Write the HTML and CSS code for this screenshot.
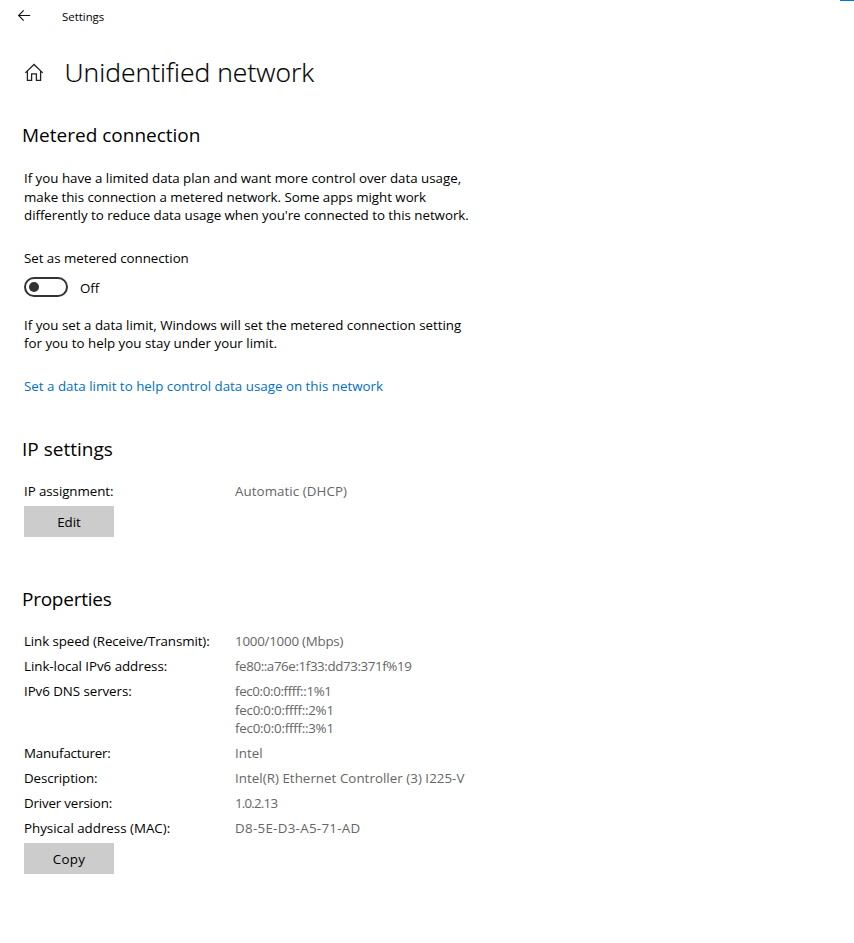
FILE: index.html
```html
<!DOCTYPE html>
<html lang="en">
<head>
<meta charset="utf-8">
<title>Settings</title>
<link rel="stylesheet" href="styles.css">
</head>
<body>
<span class="accent"></span>
<header class="titlebar">
  <svg class="back" viewBox="0 0 14 12" width="14" height="12"><path d="M13.2 5.5H1.8M6.7 .4 1.6 5.5l5.1 5.1"/></svg>
  <span class="app">Settings</span>
</header>
<main>
  <div class="heading">
    <svg class="home" viewBox="0 0 20 20" width="20" height="20"><path d="M1.3 10.9 10 2.5l8.7 8.4M3.4 9.2v9.1h4.2v-6.5h4.8v6.5h4.2V9.2"/></svg>
    <h1>Unidentified network</h1>
  </div>
  <section class="metered">
    <h2>Metered connection</h2>
    <p><span class="t w-a1">If you have a limited data plan and want more control over data usage,</span><br><span class="t w-a2">make this connection a metered network. Some apps might work</span><br><span class="t w-a3">differently to reduce data usage when you're connected to this network.</span></p>
    <div class="label"><span class="t w-set">Set as metered connection</span></div>
    <div class="switch-row"><span class="switch"></span><span class="state">Off</span></div>
    <p class="hint"><span class="t">If you set a data limit, Windows will set the metered connection setting</span><br><span class="t">for you to help you stay under your limit.</span></p>
    <a class="link">Set a data limit to help control data usage on this network</a>
  </section>
  <section class="ip">
    <h2>IP settings</h2>
    <dl><dt class="w-ipa">IP assignment:</dt><dd class="w-auto">Automatic (DHCP)</dd></dl>
    <button>Edit</button>
  </section>
  <section class="properties">
    <h2 class="w-prop">Properties</h2>
    <dl>
      <dt class="w-speed">Link speed (Receive/Transmit):</dt><dd class="w-mbps">1000/1000 (Mbps)</dd>
      <dt class="w-local">Link-local IPv6 address:</dt><dd class="w-fe80">fe80::a76e:1f33:dd73:371f%19</dd>
      <dt class="w-dns">IPv6 DNS servers:</dt><dd><span class="w-d1">fec0:0:0:ffff::1%1</span><br><span class="w-d2">fec0:0:0:ffff::2%1</span><br><span class="w-d2">fec0:0:0:ffff::3%1</span></dd>
      <dt class="w-man">Manufacturer:</dt><dd>Intel</dd>
      <dt class="w-desc">Description:</dt><dd class="w-ctrl">Intel(R) Ethernet Controller (3) I225-V</dd>
      <dt class="w-man">Driver version:</dt><dd class="w-ver">1.0.2.13</dd>
      <dt>Physical address (MAC):</dt><dd class="w-mac">D8-5E-D3-A5-71-AD</dd>
    </dl>
    <button class="w-copy">Copy</button>
  </section>
</main>
</body>
</html>
```

FILE: styles.css
```css
* { box-sizing: border-box; }
body { margin: 0; background: #fff; color: #000; font: 13.33px/18.62px "Open Sans", "Noto Sans", sans-serif; }
.t { white-space: nowrap; }
.accent { position: absolute; top: 0; right: 0; width: 14px; height: 1px; background: #0078d7; }
.titlebar { display: flex; align-items: center; height: 32px; padding-left: 17px; }
.back { fill: none; stroke: #111; stroke-width: 1.1; margin-right: 31px; }
.app { font-size: 11.4px; padding-top: 2px; }
svg { flex: none; }
.heading { display: flex; align-items: center; height: 80px; padding-left: 24px; }
.home { fill: none; stroke: #222; stroke-width: 1.3; margin-right: 20.5px; }
h1 { margin: 0; font-weight: 300; font-size: 26.5px; line-height: 36px; -webkit-text-stroke: 0.2px #000; }
section { padding-left: 24px; }
h2 { margin: 0 0 0 -2px; font-size: 19px; font-weight: 400; line-height: 26px; }
p { margin: 0; }
.metered { padding-top: 10px; height: 314px; }
.metered p { margin-top: 21px; }
.metered .hint { margin-top: 19px; }
.label { margin-top: 24px; }
.switch-row { display: flex; align-items: center; gap: 12px; height: 20px; margin-top: 9px; }
.switch { width: 44px; height: 20px; border: 2px solid #333; border-radius: 10px; display: flex; align-items: center; padding-left: 3px; }
.switch::before { content: ""; width: 10px; height: 10px; border-radius: 50%; background: #333; }
.state { padding-top: 3px; }
.link { display: block; margin-top: 24px; color: #0070c9; letter-spacing: 0.01px; }
.ip { height: 150px; padding-top: 10px; }
.properties { padding-top: 10px; }
dl { margin: 20px 0 5px; display: grid; grid-template-columns: 211px 1fr; row-gap: 6.38px; }
dt, dd { margin: 0; }
dd { color: #666; }
button { display: block; width: 90px; height: 31px; border: 0; padding: 2px 0 0; background: #ccc; color: #000; font: inherit; }

/* Tracking adjustments */
.w-a1 { letter-spacing: -0.015px; }
.w-a2 { letter-spacing: -0.035px; }
.w-a3 { letter-spacing: -0.028px; }
.w-set { letter-spacing: -0.04px; }
.w-ipa { letter-spacing: -0.07px; }
.w-auto { letter-spacing: 0.07px; }
.w-prop { letter-spacing: -0.25px; }
.w-speed { letter-spacing: -0.1px; }
.w-mbps { letter-spacing: -0.23px; }
.w-local { letter-spacing: -0.04px; }
.w-fe80 { letter-spacing: -0.39px; }
.w-dns { letter-spacing: -0.06px; }
.w-d1 { letter-spacing: -0.35px; }
.w-d2 { letter-spacing: -0.23px; }
.w-man { letter-spacing: -0.17px; }
.w-desc { letter-spacing: -0.1px; }
.w-ctrl { letter-spacing: 0.04px; }
.w-ver { letter-spacing: -0.8px; }
.w-mac { letter-spacing: 0.3px; }
.w-copy { letter-spacing: 0.3px; }
```
